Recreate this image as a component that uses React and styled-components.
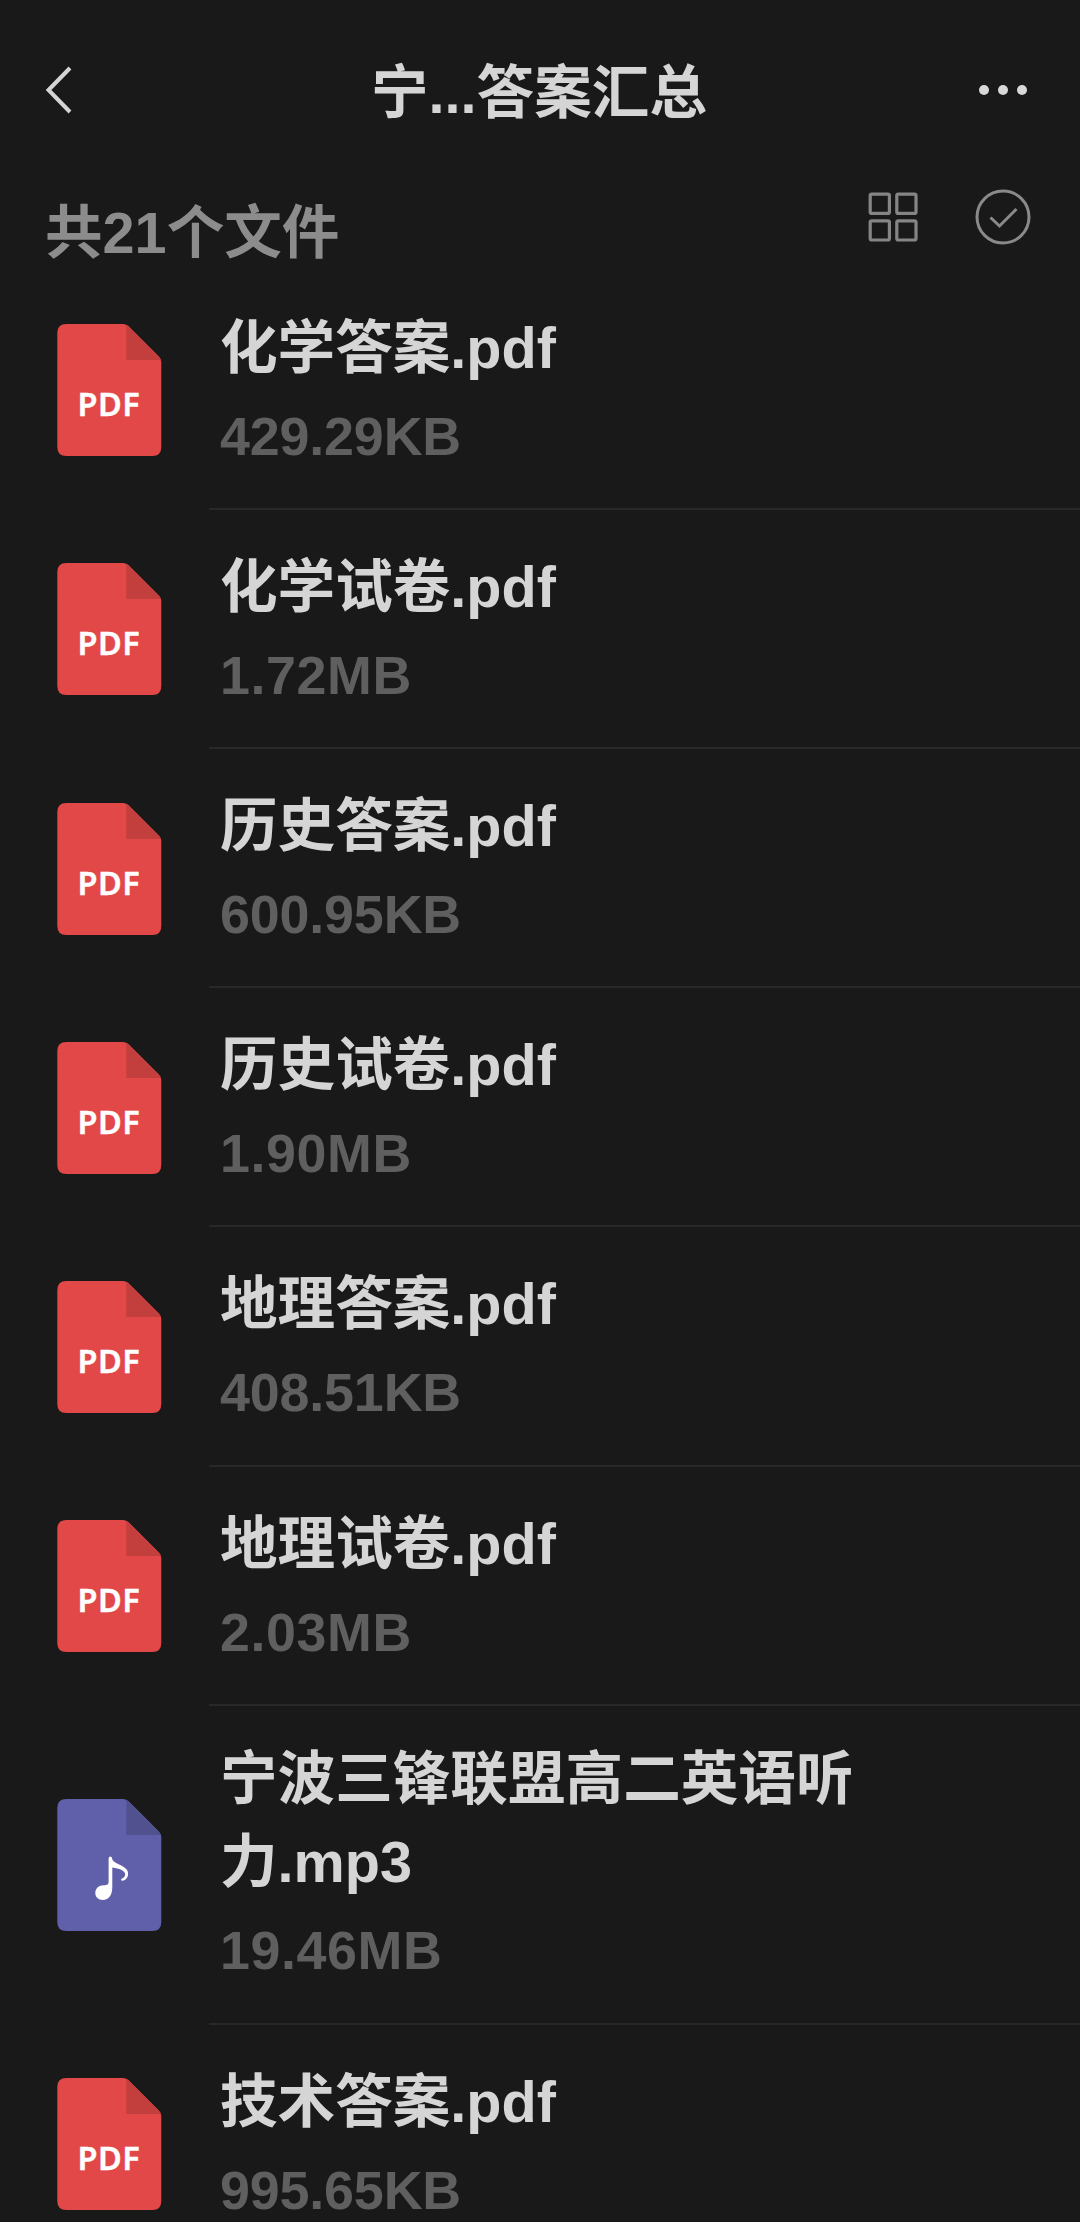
import styled, { createGlobalStyle } from "styled-components";

const files = [
  { name: "化学答案.pdf", size: "429.29", unit: "KB", type: "pdf" },
  { name: "化学试卷.pdf", size: "1.72", unit: "MB", type: "pdf" },
  { name: "历史答案.pdf", size: "600.95", unit: "KB", type: "pdf" },
  { name: "历史试卷.pdf", size: "1.90", unit: "MB", type: "pdf" },
  { name: "地理答案.pdf", size: "408.51", unit: "KB", type: "pdf" },
  { name: "地理试卷.pdf", size: "2.03", unit: "MB", type: "pdf" },
  {
    name: "宁波三锋联盟高二英语听力.mp3",
    size: "19.46",
    unit: "MB",
    type: "audio",
    multiline: true,
  },
  { name: "技术答案.pdf", size: "995.65", unit: "KB", type: "pdf" },
];

const FileIcon = ({ type }) => (
  <IconSvg viewBox="0 0 104 132" $type={type}>
    <path
      className="page"
      d="M9 0H66Q69 0 71.500 2.500L101.500 32.500Q104 35 104 38V123Q104 132 95 132H9Q0 132 0 123V9Q0 0 9 0Z"
    />
    <path
      className="fold"
      d="M69 .8Q70.300 1.300 71.500 2.500L101.500 32.500Q103 34 103.600 36H69Z"
    />
    {type === "pdf" ? (
      <text x="51.500" y="92.300" textAnchor="middle">
        PDF
      </text>
    ) : (
      <path
        className="note"
        d="M51.300 59.500Q51.500 57.500 53 57.500Q54.500 57.500 54.800 59.500C55.500 63 59 64 63.500 66.300C68.500 69 71 71.500 70.800 75C70.600 79 68 81.500 65 81.800C63.500 81.500 63.500 80 64.800 79.500C66.800 78.500 68 77 67.800 75C67.500 71.500 62 69.500 55 68.500V88C55 96 51.500 101 45.500 101C41 101 38 98 38 94C38 89.300 41.800 86.300 46.300 86.300C48.500 86.300 51.300 86.300 51.300 83Z"
      />
    )}
  </IconSvg>
);

const FileItem = ({ file }) => (
  <Row>
    <FileIcon type={file.type} />
    <Info $multiline={file.multiline}>
      <Name>{file.name}</Name>
      <Size $unit={file.unit}>
        {file.size}
        {file.unit}
      </Size>
    </Info>
  </Row>
);

const App = () => {
  return (
    <Wrapper>
      <GlobalStyle />
      <Header>
        <IconButton aria-label="back">
          <svg width="30" height="50" viewBox="0 0 30 50">
            <path d="M25 3L3.500 25L25 47" stroke="#d5d5d5" strokeWidth="4" />
          </svg>
        </IconButton>
        <h1>宁...答案汇总</h1>
        <IconButton aria-label="more">
          <svg width="50" height="12" viewBox="0 0 50 12">
            <g fill="#d8d8d8">
              <circle cx="6" cy="6" r="5" />
              <circle cx="25" cy="6" r="5" />
              <circle cx="44" cy="6" r="5" />
            </g>
          </svg>
        </IconButton>
      </Header>
      <Toolbar>
        <Count>共21个文件</Count>
        <Actions>
          <IconButton aria-label="grid">
            <svg width="50" height="50" viewBox="0 0 50 50">
              <g stroke="#858585" strokeWidth="3.200">
                <rect x="2.200" y="2.200" width="19.200" height="19.200" rx="1.500" />
                <rect x="28.800" y="2.200" width="19.200" height="19.200" rx="1.500" />
                <rect x="2.200" y="28.800" width="19.200" height="19.200" rx="1.500" />
                <rect x="28.800" y="28.800" width="19.200" height="19.200" rx="1.500" />
              </g>
            </svg>
          </IconButton>
          <IconButton aria-label="select">
            <svg width="56" height="56" viewBox="0 0 56 56">
              <g stroke="#8a8a8a" strokeWidth="3">
                <circle cx="28" cy="28" r="26" />
                <path d="M15.500 28.500L24.500 37L41.500 20" />
              </g>
            </svg>
          </IconButton>
        </Actions>
      </Toolbar>
      <List>
        {files.map((file) => (
          <FileItem key={file.name} file={file} />
        ))}
      </List>
    </Wrapper>
  );
};

const GlobalStyle = createGlobalStyle`
  * {
    box-sizing: border-box;
    margin: 0;
    padding: 0;
  }
  html, body {
    background-color: #191919;
  }
  body {
    height: 2222px;
    overflow: hidden;
  }
`;

const Wrapper = styled.div`
  width: 1080px;
  height: 2222px;
  overflow: hidden;
  background-color: #191919;
  color: #d5d5d5;
  font-family: "Liberation Sans", "Noto Sans CJK SC", sans-serif;
  font-size: 57.6px;
  font-weight: 700;
`;

const Header = styled.header`
  display: grid;
  grid-template-columns: 1fr auto 1fr;
  align-items: center;
  height: 180px;
  padding: 0 52px 0 45px;
  h1 {
    padding: 5px 0 0 5px;
    font-size: inherit;
    line-height: 84px;
  }
  button:last-child {
    justify-self: end;
  }
`;

const IconButton = styled.button`
  display: flex;
  border: none;
  background: none;
  svg {
    display: block;
    fill: none;
  }
`;

const Toolbar = styled.div`
  display: flex;
  justify-content: space-between;
  height: 90.6px;
  padding: 8px 49px 0 45px;
`;

const Count = styled.p`
  padding-top: 3px;
  color: #8c8c8c;
  line-height: 84px;
`;

const Actions = styled.div`
  display: flex;
  align-items: center;
  gap: 57px;
  height: 57px;
`;

const List = styled.ul`
  list-style: none;
`;

const Row = styled.li`
  display: flex;
  align-items: center;
  padding-left: 57.400px;
`;

const IconSvg = styled.svg`
  flex: none;
  width: 104.600px;
  height: 132px;
  .page {
    fill: ${({ $type }) => ($type === "pdf" ? "#e24848" : "#5f5faa")};
  }
  .fold {
    fill: ${({ $type }) => ($type === "pdf" ? "#c23f3e" : "#50518e")};
  }
  .note {
    fill: white;
  }
  text {
    fill: white;
    stroke: white;
    stroke-width: 0.4px;
    font-family: "Noto Sans", sans-serif;
    font-size: 32.500px;
    font-weight: 600;
    letter-spacing: 0.5px;
  }
`;

const Info = styled.div`
  flex: 1;
  margin-left: 47px;
  padding: ${({ $multiline }) => ($multiline ? "32.5px" : "36px")} 200px 33px 11px;
  border-bottom: 2px solid #282828;
`;

const Name = styled.p`
  line-height: 83px;
  word-break: break-all;
`;

const Size = styled.p`
  padding-top: 8px;
  color: #5f5f5f;
  font-size: 53.800px;
  letter-spacing: ${({ $unit }) => ($unit === "MB" ? "0.6px" : "-0.15px")};
  line-height: 77.200px;
`;

export default App;
